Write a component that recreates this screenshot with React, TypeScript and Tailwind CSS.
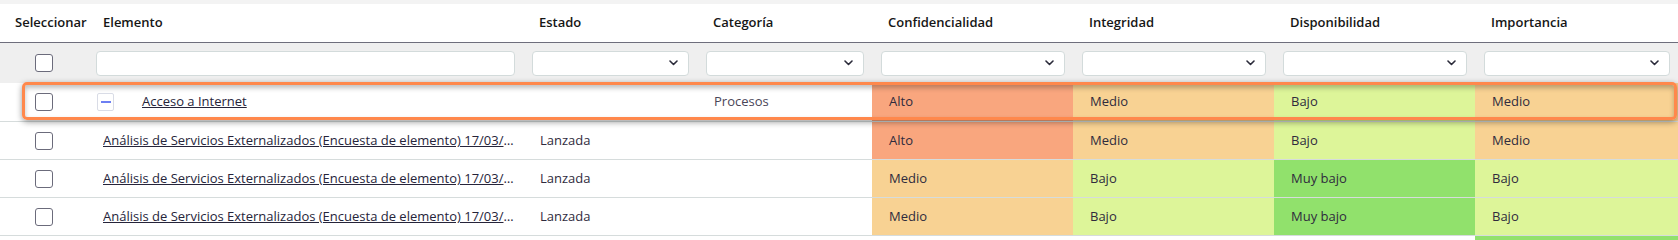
import { Fragment } from 'react'

type Level = 'Alto' | 'Medio' | 'Bajo' | 'Muy bajo' | ''

type Row = {
  element: string
  estado: string
  categoria: string
  conf: Level
  integ: Level
  disp: Level
  imp: Level
  child?: boolean
}

const cols = 'grid grid-cols-[87px_436px_174px_175px_201px_201px_201px_1fr]'

const levelBg: Record<Level, string> = {
  Alto: 'bg-[#f9a67e]',
  Medio: 'bg-[#f8d293]',
  Bajo: 'bg-[#ddf599]',
  'Muy bajo': 'bg-[#91e16c]',
  '': 'bg-white',
}

const analisis = 'Análisis de Servicios Externalizados (Encuesta de elemento) 17/03/2023 10:24'

const rows: Row[] = [
  { element: analisis, estado: 'Lanzada', categoria: '', conf: 'Alto', integ: 'Medio', disp: 'Bajo', imp: 'Medio' },
  { element: analisis, estado: 'Lanzada', categoria: '', conf: 'Medio', integ: 'Bajo', disp: 'Muy bajo', imp: 'Bajo' },
  { element: analisis, estado: 'Lanzada', categoria: '', conf: 'Medio', integ: 'Bajo', disp: 'Muy bajo', imp: 'Bajo' },
  { element: analisis, estado: 'Lanzada', categoria: '', conf: '', integ: '', disp: '', imp: 'Muy bajo' },
]

function Checkbox() {
  return <span className="block w-[18px] h-[18px] rounded-[3px] border-[1.5px] border-[#6b6b7b] bg-white" />
}

function Select() {
  return (
    <div className="h-[25px] w-full rounded-[4px] border border-[#d3dbdb] bg-white flex items-center justify-end pr-[10px]">
      <svg width="9" height="6" viewBox="0 0 9 6" fill="none">
        <polyline points="1,1 4.5,4.5 8,1" stroke="#2b2b3a" strokeWidth="1.6" strokeLinecap="round" strokeLinejoin="round" />
      </svg>
    </div>
  )
}

function LevelCell({ level }: { level: Level }) {
  return (
    <div className={`${levelBg[level]} flex items-center pl-[17px] text-[#2f2b3d]`}>{level}</div>
  )
}

export default function App() {
  const headers = ['Seleccionar', 'Elemento', 'Estado', 'Categoría', 'Confidencialidad', 'Integridad', 'Disponibilidad', 'Importancia']

  return (
    <div className="w-[1678px] bg-white text-[13px] text-[#2f2b3d] font-['Open_Sans',sans-serif] overflow-hidden">
      <div className="h-[4px] bg-[#f3f3f3]" />

      {/* header */}
      <div className={`${cols} h-[39px] border-b border-[#6e6e7c] font-semibold text-[#161616]`}>
        {headers.map((h, i) => (
          <div key={h} className={`flex items-center whitespace-nowrap ${i === 0 ? 'pl-[15px]' : 'pl-4'}`}>
            {h}
          </div>
        ))}
      </div>

      {/* filters */}
      <div className={`${cols} h-[40px] bg-[#efefef] items-center`}>
        <div className="flex justify-center pl-[1px]">
          <Checkbox />
        </div>
        <div className="pl-[9px] pr-[8px]">
          <div className="h-[25px] w-full rounded-[4px] border border-[#d3dbdb] bg-white" />
        </div>
        {Array.from({ length: 6 }).map((_, i) => (
          <div key={i} className="pl-[9px] pr-[8px]">
            <Select />
          </div>
        ))}
      </div>

      {/* highlighted row */}
      <div className={`${cols} relative h-[39px] border-b border-[#d6dcdc]`}>
        <div className="flex items-center justify-center pl-[1px]">
          <Checkbox />
        </div>
        <div className="flex items-center pl-[10px]">
          <span className="w-[17px] h-[18px] rounded-[2px] border border-[#d9dce6] bg-white flex items-center justify-center">
            <span className="block w-[10px] h-[2px] bg-[#6d7ff2]" />
          </span>
          <a href="#" className="ml-[28px] underline text-[#26243a]">
            Acceso a Internet
          </a>
        </div>
        <div />
        <div className="flex items-center pl-[17px] text-[#4a4658]">Procesos</div>
        <LevelCell level="Alto" />
        <LevelCell level="Medio" />
        <LevelCell level="Bajo" />
        <LevelCell level="Medio" />
        <div className="pointer-events-none absolute left-[22px] right-[1px] -top-px bottom-px z-10 rounded-[5px] border-[3px] border-[#ff884c] shadow-[0_2px_6px_rgba(0,0,0,0.4),inset_0_3px_5px_rgba(0,0,0,0.25)]" />
      </div>

      {rows.map((r, i) => (
        <Fragment key={i}>
          <div className={`${cols} h-[38px] border-b border-[#d6dcdc]`}>
            <div className="flex items-center justify-center pl-[1px]">
              <Checkbox />
            </div>
            <div className="flex items-center pl-4 pr-[9px] min-w-0">
              <a href="#" className="truncate underline text-[#26243a]">
                {r.element}
              </a>
            </div>
            <div className="flex items-center pl-[17px]">{r.estado}</div>
            <div className="flex items-center pl-[17px]">{r.categoria}</div>
            <LevelCell level={r.conf} />
            <LevelCell level={r.integ} />
            <LevelCell level={r.disp} />
            <LevelCell level={r.imp} />
          </div>
        </Fragment>
      ))}
    </div>
  )
}
